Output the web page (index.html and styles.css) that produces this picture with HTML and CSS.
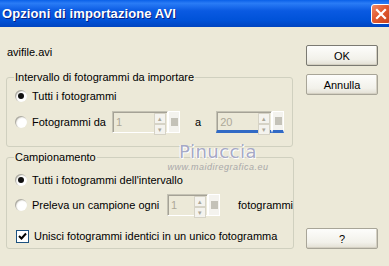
FILE: index.html
```html
<!DOCTYPE html>
<html lang="it">
<head>
  <meta charset="UTF-8">
  <title>Opzioni di importazione AVI</title>
  <link rel="stylesheet" href="styles.css">
</head>
<body>
  <div class="window">
    <!-- Barra del titolo -->
    <div class="titlebar">
      <span class="title">Opzioni di importazione AVI</span>
      <span class="close">
        <svg width="12" height="12" viewBox="0 0 12 12"><path d="M2 2 L10 10 M10 2 L2 10" stroke="#fff" stroke-width="2.2" stroke-linecap="square"/></svg>
      </span>
    </div>

    <div class="content">
      <div class="main">
        <div class="filename">avifile.avi</div>

        <fieldset class="group first">
          <legend>Intervallo di fotogrammi da importare</legend>
          <div class="row">
            <span class="radio checked"></span>
            <span>Tutti i fotogrammi</span>
          </div>
          <div class="row spaced">
            <span class="radio"></span>
            <span class="label-from">Fotogrammi da</span>
            <div class="spin">
              <div class="spin-box wide">
                <span class="spin-value">1</span>
                <span class="spin-arrows"><i>&#9652;</i><i>&#9662;</i></span>
              </div>
              <span class="spin-square"><b></b></span>
            </div>
            <span class="label-a">a</span>
            <div class="spin focused">
              <div class="spin-box wide">
                <span class="spin-value">20</span>
                <span class="spin-arrows"><i>&#9652;</i><i>&#9662;</i></span>
              </div>
              <span class="spin-square"><b></b></span>
            </div>
          </div>
        </fieldset>

        <fieldset class="group second">
          <legend>Campionamento</legend>
          <div class="row">
            <span class="radio checked"></span>
            <span>Tutti i fotogrammi dell'intervallo</span>
          </div>
          <div class="row spaced">
            <span class="radio"></span>
            <span class="label-sample">Preleva un campione ogni</span>
            <div class="spin">
              <div class="spin-box narrow">
                <span class="spin-value">1</span>
                <span class="spin-arrows"><i>&#9652;</i><i>&#9662;</i></span>
              </div>
              <span class="spin-square"><b></b></span>
            </div>
            <span class="label-frames">fotogrammi</span>
          </div>
          <div class="row check-row">
            <span class="checkbox">
              <svg width="9" height="9" viewBox="0 0 9 9"><path d="M1 4 L3.5 6.5 L8 1.5" fill="none" stroke="#000" stroke-width="2"/></svg>
            </span>
            <span>Unisci fotogrammi identici in un unico fotogramma</span>
          </div>
        </fieldset>
      </div>

      <div class="buttons">
        <button class="btn default">OK</button>
        <button class="btn">Annulla</button>
        <button class="btn help">?</button>
      </div>
    </div>

    <!-- Filigrana -->
    <div class="watermark">
      <span class="wm-name">Pinuccia</span>
      <span class="wm-url">www.maidiregrafica.eu</span>
    </div>
  </div>
</body>
</html>
```

FILE: styles.css
```css
/* Generale */
* {
  margin: 0;
  padding: 0;
  box-sizing: border-box;
}

body {
  background: #ece9d8;
  font-family: "Liberation Sans", Arial, sans-serif;
  font-size: 11px;
  color: #000;
}

.window {
  position: relative;
  width: 389px;
  height: 266px;
  background: #ece9d8;
  overflow: hidden;
}

/* Barra del titolo */
.titlebar {
  height: 27px;
  display: flex;
  align-items: center;
  justify-content: space-between;
  padding-left: 2px;
  background: linear-gradient(to bottom, #0a60e8 0%, #2a7cf6 12%, #0a5ae2 40%, #0052d8 75%, #0044c0 100%);
}

.title {
  color: #fff;
  font-weight: bold;
  font-size: 13px;
  letter-spacing: 0.1px;
  text-shadow: 1px 1px 0 #0a1e80;
}

.close {
  width: 20px;
  height: 20px;
  margin-right: -2px;
  border: 1px solid #fff;
  border-radius: 3px;
  background: linear-gradient(135deg, #f08a68 0%, #e25a30 45%, #c8401c 100%);
  display: flex;
  align-items: center;
  justify-content: center;
}

/* Contenuto */
.content {
  display: flex;
  padding-left: 6px;
}

.main {
  width: 287px;
  padding-top: 19px;
}

.filename {
  height: 13px;
  line-height: 13px;
  padding-left: 1px;
}

/* Gruppi */
.group {
  border: 1px solid #d0d0bf;
  border-radius: 3px;
  padding: 0 0 0 7px;
  margin-top: 12px;
}

.group.first {
  padding-bottom: 13px;
}

.group.second {
  margin-top: 4px;
  padding-bottom: 4px;
}

.group legend {
  padding: 0 1px;
  line-height: 13px;
}

.row {
  display: flex;
  align-items: center;
  height: 16px;
  margin-top: 4px;
}

.group.second .row:first-of-type {
  margin-top: 8px;
}

.row.spaced {
  height: 22px;
  margin-top: 7px;
}

.group.second .row.spaced {
  margin-top: 6px;
}

.row.check-row {
  margin-top: 12px;
}

/* Radio e checkbox */
.radio {
  width: 12px;
  height: 12px;
  margin: 0 5px 0 1px;
  border-radius: 50%;
  background: radial-gradient(circle at 65% 65%, #fff 45%, #e6e4dc 80%);
  box-shadow: inset 1px 1px 1px #a8a69c;
  position: relative;
  flex-shrink: 0;
}

.radio.checked::after {
  content: "";
  position: absolute;
  left: 3px;
  top: 3px;
  width: 6px;
  height: 6px;
  border-radius: 50%;
  background: #111;
}

.checkbox {
  width: 13px;
  height: 13px;
  margin: 0 5px 0 2px;
  border: 1px solid #1c5180;
  background: #fff;
  display: flex;
  align-items: center;
  justify-content: center;
  flex-shrink: 0;
}

/* Campi numerici */
.label-from {
  width: 80px;
}

.label-a {
  margin: 0 15px 0 15px;
}

.label-sample {
  width: 135px;
}

.label-frames {
  margin-left: 18px;
}

.spin {
  display: flex;
  height: 22px;
}

.spin-box {
  display: flex;
  height: 22px;
  border: 1px solid #c4c2b4;
  border-right-color: #fff;
  border-bottom-color: #fff;
  box-shadow: inset 1px 1px 0 #a5a296;
}

.spin-box.wide {
  width: 56px;
}

.spin-box.narrow {
  width: 41px;
}

.spin-value {
  flex: 1;
  color: #aca899;
  padding: 3px 0 0 3px;
  line-height: 14px;
}

.spin-arrows {
  width: 12px;
  display: flex;
  flex-direction: column;
  margin: 1px 1px 1px 0;
}

.spin-arrows i {
  flex: 1;
  font-style: normal;
  font-size: 7px;
  line-height: 9px;
  color: #aca899;
  text-align: center;
  background: #f4f3ee;
  border: 1px solid #d6d3c6;
}

.spin-square {
  width: 12px;
  height: 22px;
  background: #f4f3ee;
  border: 1px solid #fff;
  display: flex;
  align-items: center;
  justify-content: center;
}

.spin-square b {
  width: 7px;
  height: 8px;
  background: #c4c2b8;
}

.spin.focused .spin-box,
.spin.focused .spin-square {
  border-bottom: 3px solid #316ac5;
}

/* Pulsanti */
.buttons {
  width: 72px;
  margin-left: 13px;
  padding-top: 18px;
  display: flex;
  flex-direction: column;
}

.btn {
  height: 21px;
  font-family: "Liberation Sans", Arial, sans-serif;
  font-size: 11px;
  color: #000;
  border: 1px solid #a8a598;
  border-radius: 2px;
  background: linear-gradient(to bottom, #fdfdfb 0%, #f2f1ea 70%, #e2dfd3 100%);
  box-shadow: inset -1px -1px 0 #d4d0c2;
}

.btn + .btn {
  margin-top: 8px;
}

.btn.default {
  border-color: #7b7a72;
}

.btn.help {
  margin-top: 133px;
}

/* Filigrana */
.watermark {
  position: absolute;
  left: 158px;
  top: 142px;
  width: 120px;
  display: flex;
  flex-direction: column;
  align-items: center;
  pointer-events: none;
}

.wm-name {
  font-family: "DejaVu Sans", sans-serif;
  font-size: 18px;
  line-height: 20px;
  letter-spacing: 0.5px;
  color: #a6a9c6;
  text-shadow: 1px 1px 0 #fff, -1px 0 0 #fff;
}

.wm-url {
  font-size: 9px;
  line-height: 10px;
  font-style: italic;
  color: #a8a8a8;
  letter-spacing: 0.5px;
}
```
